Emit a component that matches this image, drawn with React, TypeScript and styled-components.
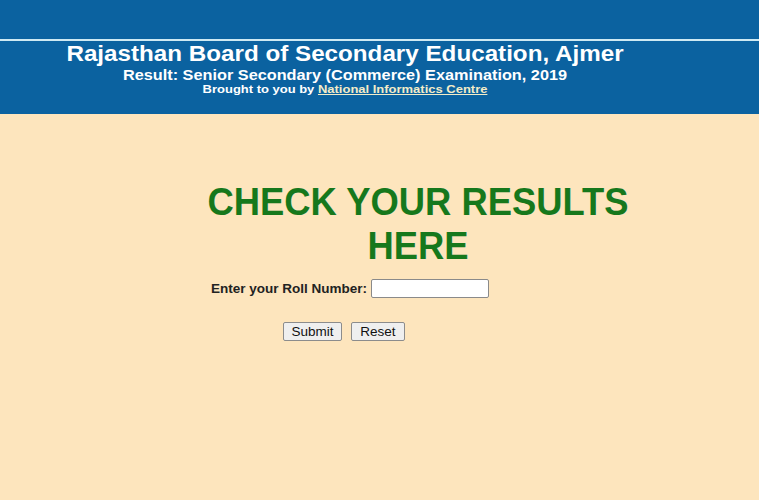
import React from "react";
import styled, { createGlobalStyle } from "styled-components";

const Global = createGlobalStyle`
  html, body { margin: 0; padding: 0; background: #fde5bd; }
  body { font-family: "Liberation Sans", Arial, sans-serif; }
`;

const Page = styled.div`
  width: 759px;
  height: 500px;
  background: #fde5bd;
  overflow: hidden;
`;

const Header = styled.header`
  height: 114px;
  background: #0b62a0;
  display: flex;
  flex-direction: column;
`;

const TopBand = styled.div`
  height: 41px;
  border-bottom: 2px solid #cfeaf3;
  box-sizing: border-box;
`;

const HeaderText = styled.div`
  display: flex;
  flex-direction: column;
  align-items: center;
  padding-right: 69px;
  color: #ffffff;
  font-weight: bold;
  transform: scaleX(1.1);
  transform-origin: 345px center;
`;

const Title = styled.div<{ $size: number; $mt: number }>`
  font-size: ${(p) => p.$size}px;
  line-height: 1;
  margin-top: ${(p) => p.$mt}px;
  white-space: nowrap;
`;

const Link = styled.a`
  color: #f3ecc8;
  text-decoration: underline;
`;

const Main = styled.main`
  display: flex;
  flex-direction: column;
`;

const Heading = styled.h1`
  margin: 66px 0 0;
  padding-left: 77px;
  text-align: center;
  color: #16781c;
  font-size: 38px;
  line-height: 44px;
  font-weight: bold;
  transform: scaleX(0.957);
  transform-origin: 418px center;
`;

const FormRow = styled.div`
  display: flex;
  justify-content: center;
  align-items: center;
  gap: 4px;
  padding-right: 59px;
  margin-top: 11px;
`;

const Label = styled.label`
  font-size: 13.5px;
  font-weight: bold;
  color: #222;
`;

const Input = styled.input`
  width: 118px;
  height: 19px;
  box-sizing: border-box;
  border: 1px solid #8a8a8a;
  border-radius: 2px;
  background: #fff;
  padding: 0 2px;
`;

const ButtonRow = styled.div`
  display: flex;
  justify-content: center;
  gap: 9px;
  padding-right: 71px;
  margin-top: 24px;
`;

const Button = styled.button<{ $w: number }>`
  width: ${(p) => p.$w}px;
  height: 19px;
  box-sizing: border-box;
  font-family: "Liberation Sans", Arial, sans-serif;
  font-size: 13.5px;
  color: #111;
  background: #efefef;
  border: 1px solid #8c8c8c;
  border-radius: 2px;
  padding: 0;
`;

export default function App() {
  return (
    <Page>
      <Global />
      <Header>
        <TopBand />
        <HeaderText>
          <Title $size={22} $mt={2}>Rajasthan Board of Secondary Education, Ajmer</Title>
          <Title $size={14.8} $mt={3}>Result: Senior Secondary (Commerce) Examination, 2019</Title>
          <Title $size={11.8} $mt={1}>
            Brought to you by <Link href="#">National Informatics Centre</Link>
          </Title>
        </HeaderText>
      </Header>
      <Main>
        <Heading>
          CHECK YOUR RESULTS
          <br />
          HERE
        </Heading>
        <FormRow>
          <Label htmlFor="roll">Enter your Roll Number:</Label>
          <Input id="roll" type="text" />
        </FormRow>
        <ButtonRow>
          <Button $w={59}>Submit</Button>
          <Button $w={54}>Reset</Button>
        </ButtonRow>
      </Main>
    </Page>
  );
}
